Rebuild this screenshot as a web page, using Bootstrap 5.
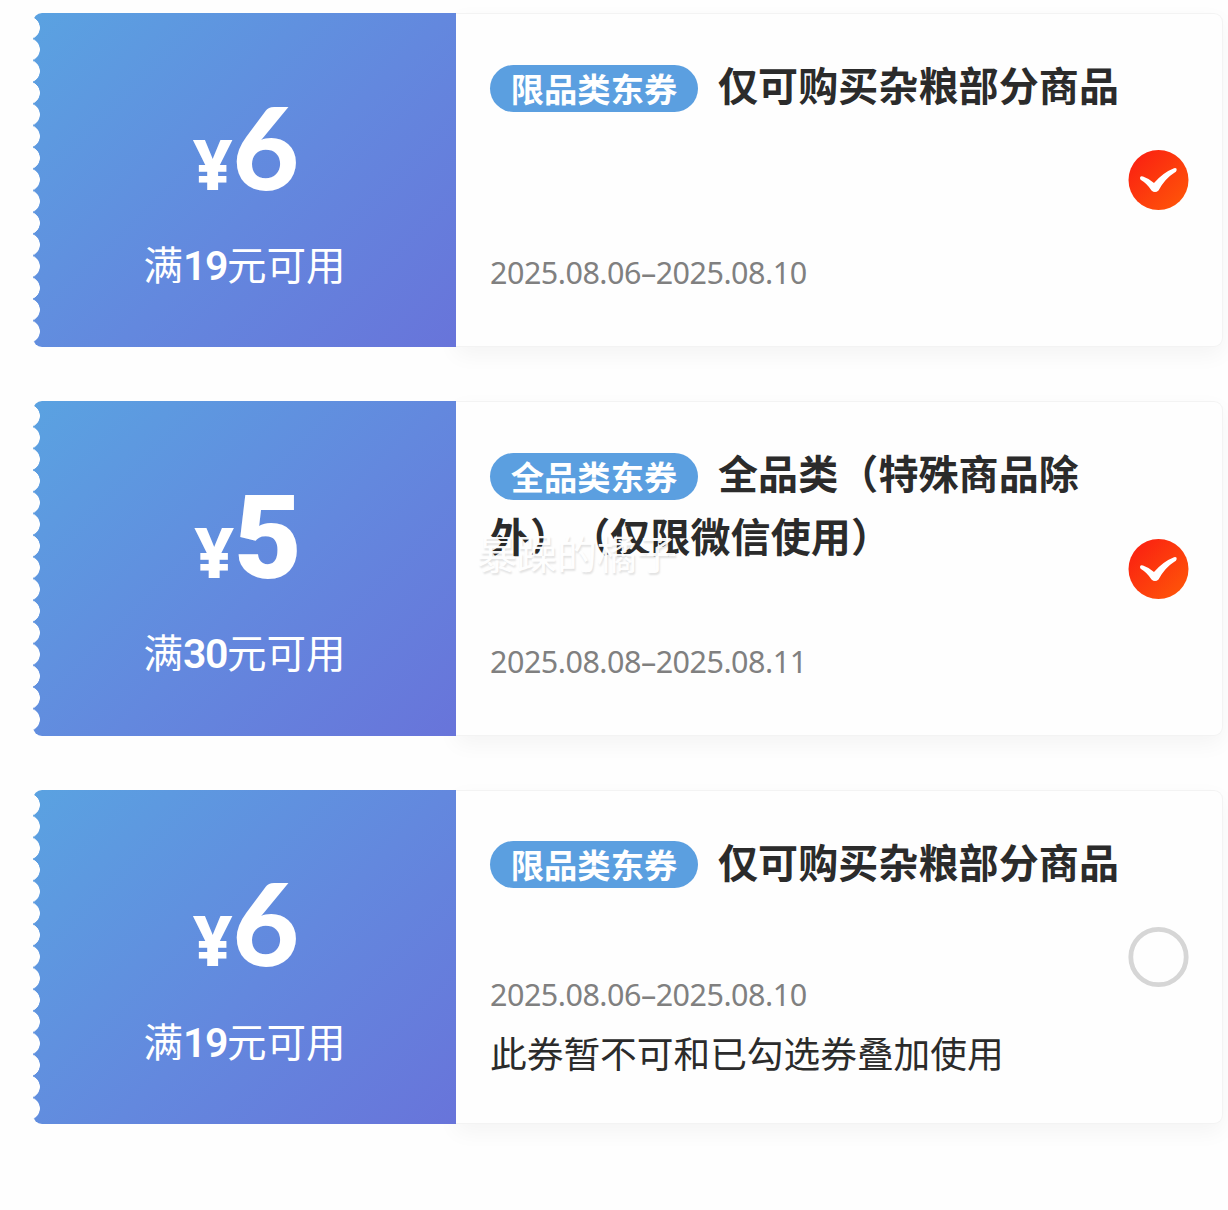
<!DOCTYPE html>
<html lang="zh-CN">
<head>
<meta charset="utf-8">
<meta name="viewport" content="width=device-width, initial-scale=1">
<title>优惠券</title>
<link href="https://cdn.jsdelivr.net/npm/bootstrap@5.3.0/dist/css/bootstrap.min.css" rel="stylesheet">
<style>
body{background:#fefefe;font-family:"Noto Sans CJK SC",sans-serif;color:#2b2b2b;text-spacing-trim:space-all}
.coupon-list{padding:13px 5px 50px 33px;gap:54px}
.coupon{height:334.4px}
.coupon-value{width:423px;border-radius:9px 0 0 9px;color:#fff;background:linear-gradient(135deg,#5aa2e1 0%,#6388de 55%,#6874da 100%);z-index:1}
/* perforated ticket edge */
.coupon-value::before{content:"";position:absolute;left:-1px;top:3.8px;width:9px;height:325.5px;background:radial-gradient(circle 11.5px at -3.5px 50%,#fefefe 11px,transparent 11.6px) 0 0/9px 21.7px repeat-y}
.amount{font-family:Lato,sans-serif;font-weight:900;font-size:115px;line-height:120px;height:120px;margin-top:71.5px;padding-left:3px}
.amount .yen{font-family:"Noto Sans",sans-serif;font-weight:800;font-size:69px;line-height:1}
.amount .five{font-family:Roboto,sans-serif;font-size:117px;line-height:1;letter-spacing:-4px}
.condition{font-size:39.5px;line-height:60px;margin-top:28.5px}
.pickers-defs{width:0;height:0}
.condition b{font-family:Roboto,sans-serif;font-weight:600;font-size:41px;line-height:1;letter-spacing:-1.5px}
.coupon-info{border:1px solid #f3f3f3;border-left:0;border-radius:0 9px 9px 0;background:#fefefe;padding:39px 33px 54px 34px;box-shadow:0 8px 22px rgba(0,0,0,.045)}
.info-stacked{padding-bottom:44px}
.coupon-title{font-size:40px;line-height:63px;font-weight:700;width:634px;letter-spacing:.1px}
.coupon-tag{display:inline-block;background:#5b9fe0;color:#fff;border-radius:24px;width:208px;height:47px;line-height:45px;font-size:33.3px;text-align:center;vertical-align:-.5px;margin-right:20px;letter-spacing:0}
.validity{font-family:"Noto Sans",sans-serif;font-size:30.5px;line-height:40px;color:#808080;letter-spacing:-.5px}
.remark{font-size:36.7px;line-height:54px;margin-top:11px}
.picker{right:33.5px;top:50%;transform:translateY(-50%);width:61px;height:61px}
.watermark{left:21px;top:120px;font-size:40px;line-height:60px;color:#fff;opacity:.95;text-shadow:1px 2px 2px rgba(0,0,0,.12);white-space:nowrap}
</style>
</head>
<body>
<svg class="pickers-defs position-absolute">
  <defs>
    <linearGradient id="hot" x1="0" y1="0" x2="1" y2="1"><stop offset="0" stop-color="#fa1b12"/><stop offset="1" stop-color="#ff5a08"/></linearGradient>
  </defs>
</svg>
<main class="coupon-list d-flex flex-column">
  <section class="coupon d-flex">
    <div class="coupon-value d-flex flex-column position-relative flex-shrink-0 text-center">
      <div class="amount"><span class="yen">¥</span>6</div>
      <div class="condition">满<b>19</b>元可用</div>
    </div>
    <div class="coupon-info position-relative flex-grow-1 d-flex flex-column justify-content-between">
      <div class="coupon-title"><span class="coupon-tag">限品类东券</span>仅可购买杂粮部分商品</div>
      <div class="validity">2025.08.06–2025.08.10</div>
      <svg class="picker position-absolute" viewBox="0 0 61 61"><circle cx="30.5" cy="30.5" r="30" fill="url(#hot)"/><path d="M12 28.5Q12 26 15 27Q21 29 26 33.5Q35 23 46 18.7Q49 18 48.7 20.5Q48.5 22.5 46 23.5Q37 29 30.5 41Q27 44 23.5 41Q19 34 13 30.5Q12 30 12 28.5Z" fill="#fff"/></svg>
    </div>
  </section>
  <section class="coupon d-flex">
    <div class="coupon-value d-flex flex-column position-relative flex-shrink-0 text-center">
      <div class="amount"><span class="yen">¥</span><span class="five">5</span></div>
      <div class="condition">满<b>30</b>元可用</div>
    </div>
    <div class="coupon-info position-relative flex-grow-1 d-flex flex-column justify-content-between">
      <div class="coupon-title"><span class="coupon-tag">全品类东券</span>全品类（特殊商品除外）（仅限微信使用）</div>
      <div class="validity">2025.08.08–2025.08.11</div>
      <div class="watermark position-absolute">暴躁的橘子</div>
      <svg class="picker position-absolute" viewBox="0 0 61 61"><circle cx="30.5" cy="30.5" r="30" fill="url(#hot)"/><path d="M12 28.5Q12 26 15 27Q21 29 26 33.5Q35 23 46 18.7Q49 18 48.7 20.5Q48.5 22.5 46 23.5Q37 29 30.5 41Q27 44 23.5 41Q19 34 13 30.5Q12 30 12 28.5Z" fill="#fff"/></svg>
    </div>
  </section>
  <section class="coupon d-flex">
    <div class="coupon-value d-flex flex-column position-relative flex-shrink-0 text-center">
      <div class="amount"><span class="yen">¥</span>6</div>
      <div class="condition">满<b>19</b>元可用</div>
    </div>
    <div class="coupon-info info-stacked position-relative flex-grow-1 d-flex flex-column justify-content-between">
      <div class="coupon-title"><span class="coupon-tag">限品类东券</span>仅可购买杂粮部分商品</div>
      <div>
        <div class="validity">2025.08.06–2025.08.10</div>
        <div class="remark">此券暂不可和已勾选券叠加使用</div>
      </div>
      <svg class="picker position-absolute" viewBox="0 0 61 61"><circle cx="30.5" cy="30.5" r="27.7" fill="none" stroke="#d6d6d6" stroke-width="4.8"/></svg>
    </div>
  </section>
</main>
<script src="https://cdn.jsdelivr.net/npm/bootstrap@5.3.0/dist/js/bootstrap.bundle.min.js"></script>
</body>
</html>
